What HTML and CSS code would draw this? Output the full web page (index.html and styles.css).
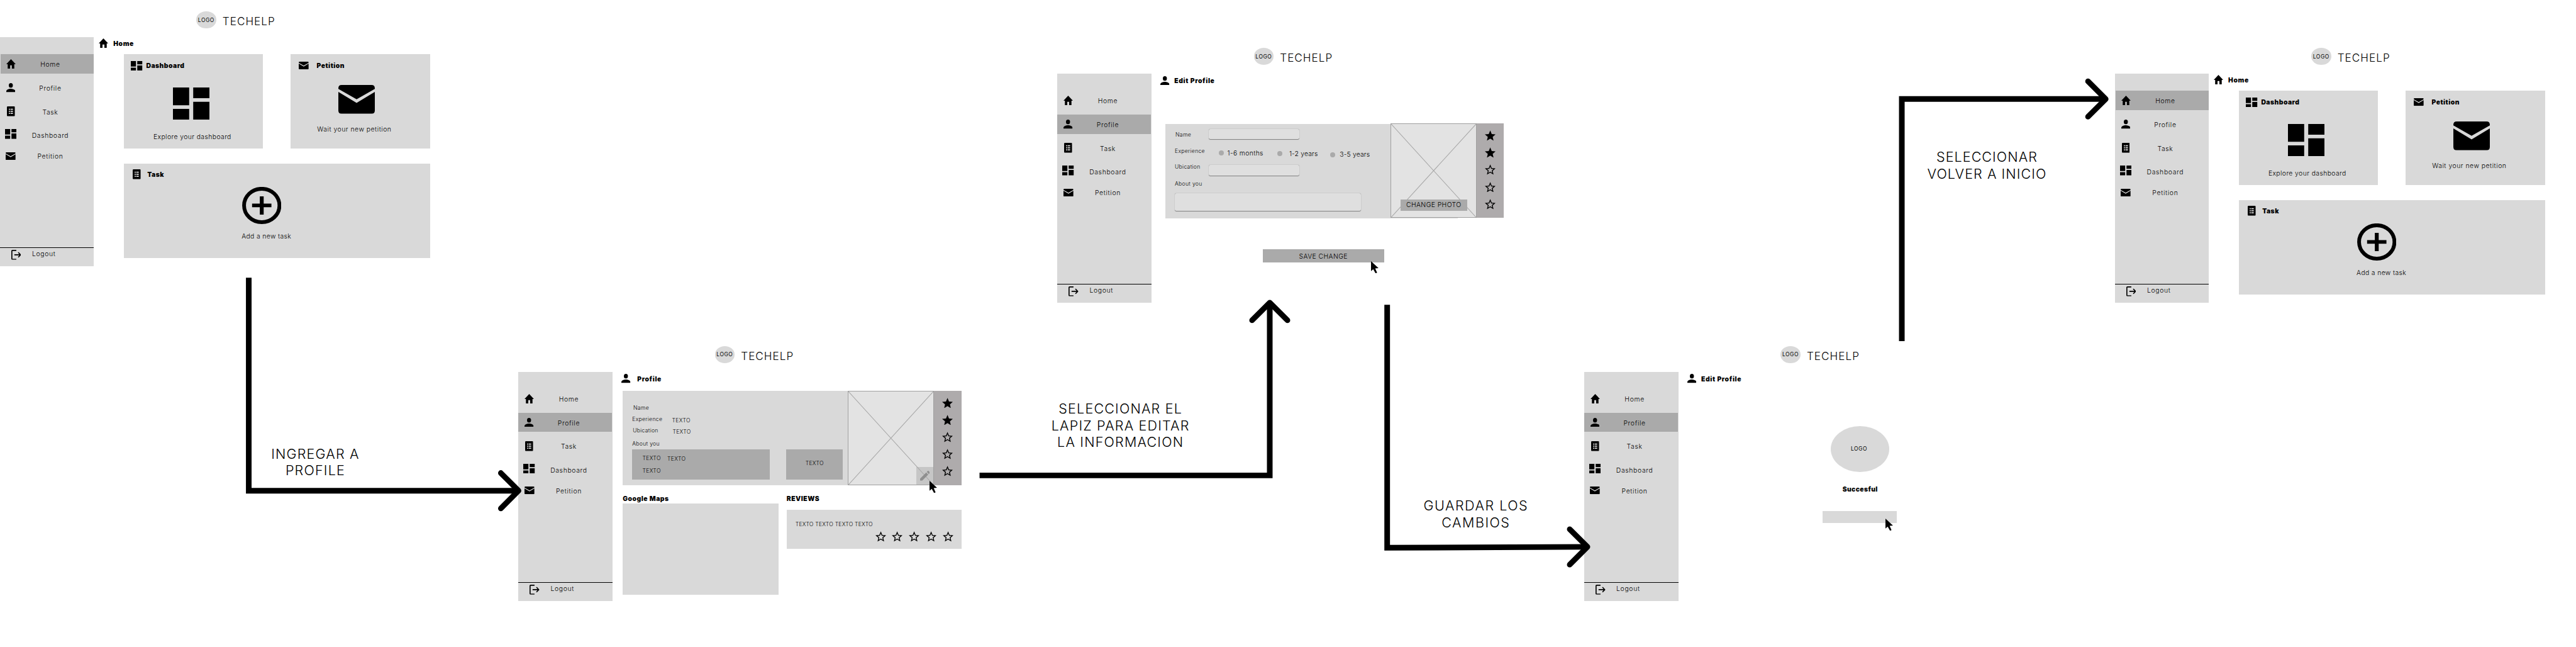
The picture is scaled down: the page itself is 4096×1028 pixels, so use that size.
FILE: index.html
```html
<!DOCTYPE html>
<html lang="es">
<head>
<meta charset="utf-8">
<title>TECHELP – user flow</title>
<link rel="stylesheet" href="styles.css">
</head>
<body>
<svg class="sprite" aria-hidden="true">
  <symbol id="home" viewBox="2 3 20 17" preserveAspectRatio="none"><path d="M10 20v-6h4v6h5v-8h3L12 3 2 12h3v8z"/></symbol>
  <symbol id="person" viewBox="4 4 16 16" preserveAspectRatio="none"><ellipse cx="12" cy="8" rx="3.6" ry="4"/><path d="M12 13.8c-3 0-8 1.4-8 4.2v2h16v-2c0-2.800-5-4.200-8-4.200z"/></symbol>
  <symbol id="task" viewBox="0 0 14.500 18" preserveAspectRatio="none"><path fill-rule="evenodd" d="M1.500 0h11.500a1.500 1.500 0 0 1 1.500 1.500v15a1.500 1.500 0 0 1-1.500 1.500h-11.500a1.500 1.500 0 0 1-1.500-1.500v-15a1.500 1.500 0 0 1 1.500-1.500zM3.500 4.200v2h2v-2zM6.500 4.200v2h4.500v-2zM3.500 8v2h2v-2zM6.500 8v2h4.500v-2zM3.500 11.800v2h2v-2zM6.500 11.800v2h4.500v-2z"/></symbol>
  <symbol id="dashboard" viewBox="3 3 18 18" preserveAspectRatio="none"><path d="M3 13h8V3H3v10zm0 8h8v-6H3v6zm10 0h8V11h-8v10zm0-18v6h8V3h-8z"/></symbol>
  <symbol id="mail" viewBox="0 0 66 52" preserveAspectRatio="none"><path d="M0 7V6Q0 0 6 0H60Q66 0 66 6V7L33 26zM0 12.500 33 32.500 66 12.500V46Q66 52 60 52H6Q0 52 0 46z"/></symbol>
  <symbol id="add" viewBox="0 0 71 67" preserveAspectRatio="none"><ellipse cx="35.500" cy="33.500" rx="32" ry="30.200" fill="none" stroke="currentColor" stroke-width="6.800"/><path d="M32 17h7v13.200h14v6.600H39V50h-7V36.800H18v-6.600h14z"/></symbol>
  <symbol id="logout" viewBox="0 0 18 18" preserveAspectRatio="none"><path fill="none" stroke="currentColor" stroke-width="1.900" d="M9 .95H2.200Q.95.95.95 2.200V15.800Q.95 17.050 2.200 17.050H9M5.500 9H16.500M12.600 4.600 16.700 9 12.600 13.400"/></symbol>
  <symbol id="star" viewBox="2 2 20 19"><path d="M12 17.270 18.180 21l-1.640-7.030L22 9.240l-7.190-.61L12 2 9.190 8.630 2 9.240l5.460 4.730L5.820 21z"/></symbol>
  <symbol id="star-o" viewBox="2 2 20 19"><path d="M22 9.240l-7.190-.62L12 2 9.190 8.630 2 9.240l5.460 4.730L5.820 21 12 17.270 18.180 21l-1.630-7.030L22 9.240zM12 15.400l-3.760 2.270 1-4.280-3.320-2.880 4.380-.38L12 6.100l1.710 4.040 4.380.38-3.320 2.880 1 4.280L12 15.400z"/></symbol>
  <symbol id="edit" viewBox="3 3 18 18" preserveAspectRatio="none"><path d="M3 17.250V21h3.750L17.810 9.940l-3.750-3.750L3 17.250zM20.710 7.040a1 1 0 0 0 0-1.410l-2.340-2.340a1 1 0 0 0-1.410 0l-1.830 1.830 3.750 3.750 1.830-1.830z"/></symbol>
  <symbol id="cursor" viewBox="0 0 14 22"><path d="M0 0V18L4 14.500 8.300 22 11 20.800 7.600 13.200 13.600 12.600z"/></symbol>
  <symbol id="cross" viewBox="0 0 156 171" preserveAspectRatio="none"><path d="M0 0 156 171M156 0 0 171" fill="none" stroke="#a8a8a8" stroke-width="1.200"/></symbol>
</svg>

<main class="canvas">

  <section class="frame frame-1">
    <header class="brand"><span class="logo">LOGO</span><h1>TECHELP</h1></header>
    <div class="body">
      <nav class="side">
        <a class="item active inset"><svg class="i-home"><use href="#home"/></svg><span>Home</span></a>
        <a class="item"><svg class="i-person"><use href="#person"/></svg><span>Profile</span></a>
        <a class="item"><svg class="i-task"><use href="#task"/></svg><span>Task</span></a>
        <a class="item"><svg class="i-dash raised"><use href="#dashboard"/></svg><span>Dashboard</span></a>
        <a class="item last"><svg class="i-mail"><use href="#mail"/></svg><span>Petition</span></a>
        <a class="logout"><svg class="i-out"><use href="#logout"/></svg><span>Logout</span></a>
      </nav>
      <div class="content">
        <h2 class="title home-title"><svg class="i-home"><use href="#home"/></svg><span>Home</span></h2>
        <div class="cards">
          <article class="card card-dash">
            <h3><i><svg class="i-dash"><use href="#dashboard"/></svg></i><span>Dashboard</span></h3>
            <div class="pic"><svg class="big-dash"><use href="#dashboard"/></svg><p>Explore your dashboard</p></div>
          </article>
          <article class="card card-mail">
            <h3><i><svg class="i-mail"><use href="#mail"/></svg></i><span>Petition</span></h3>
            <div class="pic"><svg class="big-mail"><use href="#mail"/></svg><p>Wait your new petition</p></div>
          </article>
          <article class="card card-task">
            <h3><i><svg class="i-task"><use href="#task"/></svg></i><span>Task</span></h3>
            <div class="pic"><svg class="big-add"><use href="#add"/></svg><p>Add a new task</p></div>
          </article>
        </div>
      </div>
    </div>
  </section>

  <section class="frame frame-2">
    <header class="brand"><span class="logo">LOGO</span><h1>TECHELP</h1></header>
    <div class="body">
      <nav class="side">
        <a class="item"><svg class="i-home"><use href="#home"/></svg><span>Home</span></a>
        <a class="item active"><svg class="i-person"><use href="#person"/></svg><span>Profile</span></a>
        <a class="item"><svg class="i-task"><use href="#task"/></svg><span>Task</span></a>
        <a class="item"><svg class="i-dash raised"><use href="#dashboard"/></svg><span>Dashboard</span></a>
        <a class="item last"><svg class="i-mail"><use href="#mail"/></svg><span>Petition</span></a>
        <a class="logout"><svg class="i-out"><use href="#logout"/></svg><span>Logout</span></a>
      </nav>
      <div class="content">
        <h2 class="title profile-title"><svg class="i-person"><use href="#person"/></svg><span>Profile</span></h2>
        <div class="panel view">
          <div class="details">
            <div class="row r-name"><span>Name</span></div>
            <div class="row r-exp"><span>Experience</span><b>TEXTO</b></div>
            <div class="row r-ubi"><span>Ubication</span><b>TEXTO</b></div>
            <div class="row r-about"><span>About you</span></div>
            <div class="boxes">
              <div class="box about"><div><span>TEXTO</span><span class="second">TEXTO</span></div><div><span>TEXTO</span></div></div>
              <div class="box extra"><span>TEXTO</span></div>
            </div>
          </div>
          <div class="photo"><svg class="cross"><use href="#cross"/></svg><span class="edit"><svg><use href="#edit"/></svg></span></div>
          <div class="rating">
            <svg><use href="#star"/></svg><svg><use href="#star"/></svg><svg><use href="#star-o"/></svg><svg><use href="#star-o"/></svg><svg><use href="#star-o"/></svg>
          </div>
        </div>
        <div class="lower">
          <section class="maps"><h3>Google Maps</h3><div class="map"></div></section>
          <section class="reviews"><h3>REVIEWS</h3>
            <div class="review"><p>TEXTO TEXTO TEXTO TEXTO</p>
              <div class="stars"><svg><use href="#star-o"/></svg><svg><use href="#star-o"/></svg><svg><use href="#star-o"/></svg><svg><use href="#star-o"/></svg><svg><use href="#star-o"/></svg></div>
            </div>
          </section>
        </div>
      </div>
    </div>
    <svg class="cursor"><use href="#cursor"/></svg>
  </section>

  <section class="frame frame-3">
    <header class="brand"><span class="logo">LOGO</span><h1>TECHELP</h1></header>
    <div class="body">
      <nav class="side">
        <a class="item"><svg class="i-home"><use href="#home"/></svg><span>Home</span></a>
        <a class="item active"><svg class="i-person"><use href="#person"/></svg><span>Profile</span></a>
        <a class="item"><svg class="i-task"><use href="#task"/></svg><span>Task</span></a>
        <a class="item"><svg class="i-dash raised"><use href="#dashboard"/></svg><span>Dashboard</span></a>
        <a class="item last"><svg class="i-mail"><use href="#mail"/></svg><span>Petition</span></a>
        <a class="logout"><svg class="i-out"><use href="#logout"/></svg><span>Logout</span></a>
      </nav>
      <div class="content">
        <h2 class="title edit-title"><svg class="i-person"><use href="#person"/></svg><span>Edit Profile</span></h2>
        <div class="panel form">
          <div class="fields">
            <div class="field f-name"><span>Name</span><i class="input"></i></div>
            <div class="field f-exp"><span>Experience</span>
              <label class="o1"><i></i>1-6 months</label><label class="o2"><i></i><em>1-2 years</em></label><label class="o3"><i></i>3-5 years</label>
            </div>
            <div class="field f-ubi"><span>Ubication</span><i class="input"></i></div>
            <div class="field f-about"><span>About you</span></div>
            <i class="input area"></i>
          </div>
          <div class="photo"><svg class="cross"><use href="#cross"/></svg><span class="change">CHANGE PHOTO</span></div>
          <div class="rating">
            <svg><use href="#star"/></svg><svg><use href="#star"/></svg><svg><use href="#star-o"/></svg><svg><use href="#star-o"/></svg><svg><use href="#star-o"/></svg>
          </div>
        </div>
        <div class="save">SAVE CHANGE</div>
      </div>
    </div>
    <svg class="cursor"><use href="#cursor"/></svg>
  </section>

  <section class="frame frame-4">
    <header class="brand"><span class="logo">LOGO</span><h1>TECHELP</h1></header>
    <div class="body">
      <nav class="side">
        <a class="item"><svg class="i-home"><use href="#home"/></svg><span>Home</span></a>
        <a class="item active"><svg class="i-person"><use href="#person"/></svg><span>Profile</span></a>
        <a class="item"><svg class="i-task"><use href="#task"/></svg><span>Task</span></a>
        <a class="item"><svg class="i-dash raised"><use href="#dashboard"/></svg><span>Dashboard</span></a>
        <a class="item last"><svg class="i-mail"><use href="#mail"/></svg><span>Petition</span></a>
        <a class="logout"><svg class="i-out"><use href="#logout"/></svg><span>Logout</span></a>
      </nav>
      <div class="content">
        <h2 class="title edit-title"><svg class="i-person"><use href="#person"/></svg><span>Edit Profile</span></h2>
        <div class="success">
          <span class="disc">LOGO</span>
          <strong>Succesful</strong>
          <span class="done"></span>
        </div>
      </div>
    </div>
    <svg class="cursor"><use href="#cursor"/></svg>
  </section>

  <section class="frame frame-5">
    <header class="brand"><span class="logo">LOGO</span><h1>TECHELP</h1></header>
    <div class="body">
      <nav class="side">
        <a class="item active inset"><svg class="i-home"><use href="#home"/></svg><span>Home</span></a>
        <a class="item"><svg class="i-person"><use href="#person"/></svg><span>Profile</span></a>
        <a class="item"><svg class="i-task"><use href="#task"/></svg><span>Task</span></a>
        <a class="item"><svg class="i-dash raised"><use href="#dashboard"/></svg><span>Dashboard</span></a>
        <a class="item last"><svg class="i-mail"><use href="#mail"/></svg><span>Petition</span></a>
        <a class="logout"><svg class="i-out"><use href="#logout"/></svg><span>Logout</span></a>
      </nav>
      <div class="content">
        <h2 class="title home-title"><svg class="i-home"><use href="#home"/></svg><span>Home</span></h2>
        <div class="cards">
          <article class="card card-dash">
            <h3><i><svg class="i-dash"><use href="#dashboard"/></svg></i><span>Dashboard</span></h3>
            <div class="pic"><svg class="big-dash"><use href="#dashboard"/></svg><p>Explore your dashboard</p></div>
          </article>
          <article class="card card-mail">
            <h3><i><svg class="i-mail"><use href="#mail"/></svg></i><span>Petition</span></h3>
            <div class="pic"><svg class="big-mail"><use href="#mail"/></svg><p>Wait your new petition</p></div>
          </article>
          <article class="card card-task">
            <h3><i><svg class="i-task"><use href="#task"/></svg></i><span>Task</span></h3>
            <div class="pic"><svg class="big-add"><use href="#add"/></svg><p>Add a new task</p></div>
          </article>
        </div>
      </div>
    </div>
  </section>

  <svg class="arrows" viewBox="0 0 4660 1169" preserveAspectRatio="none">
    <g fill="none" stroke="#000" stroke-width="10.200" stroke-linejoin="miter">
      <path d="M450 502V887H938"/>
      <path d="M1772 859.400H2297V547"/>
      <path d="M2509.400 551V990.200L2872 988.500"/>
      <path d="M3440.400 616.700V179H3809"/>
    </g>
    <g fill="none" stroke="#000" stroke-width="10" stroke-linejoin="round" stroke-linecap="round">
      <path d="M906 855 938 887 906 919"/>
      <path d="M2265 579 2297 547 2329 579"/>
      <path d="M2839.600 956.700 2871.700 988.500 2839.600 1020.700"/>
      <path d="M3777.200 147 3809.300 179 3777.200 211"/>
    </g>
  </svg>
  <p class="step step-1">INGREGAR A<br>PROFILE</p>
  <p class="step step-2">SELECCIONAR EL<br>LAPIZ PARA EDITAR<br>LA INFORMACION</p>
  <p class="step step-3">GUARDAR LOS<br>CAMBIOS</p>
  <p class="step step-4">SELECCIONAR<br>VOLVER A INICIO</p>
</main>
</body>
</html>
```

FILE: styles.css
```css
/* 1rem is ten units of the 4660-unit wide board */
html { font-size: calc(100vw / 466); }
* { box-sizing: border-box; margin: 0; padding: 0; }
body {
  background: #fff;
  color: #000;
  font-family: Inter, "Open Sans", sans-serif;
  overflow: hidden;
}
h1, h2, h3, b, i, em { font: inherit; }
svg { display: block; fill: currentColor; color: #000; flex: none; }
.sprite { position: absolute; width: 0; height: 0; }
.canvas { position: relative; width: 466rem; height: 116.9rem; overflow: hidden; }

/* frames placed on the board */
.frame { position: absolute; width: 81rem; height: 48.1rem; }
.frame-1 { left: 0; top: 0; }
.frame-2 { left: 93.8rem; top: 60.5rem; }
.frame-3 { left: 191.3rem; top: 6.6rem; }
.frame-4 { left: 286.6rem; top: 60.5rem; }
.frame-5 { left: 382.6rem; top: 6.6rem; }

.brand { height: 6.7rem; padding: 2.1rem 0 0 35.5rem; display: flex; align-items: flex-start; gap: 1.15rem; }
.logo {
  width: 3.6rem; height: 3rem; border-radius: 50%; background: #d9d9d9;
  display: flex; align-items: center; justify-content: center;
  font-size: .97rem; letter-spacing: .06em; white-space: nowrap;
}
.brand h1 { font-size: 1.95rem; line-height: 2.4rem; padding-top: .5rem; letter-spacing: .06em; font-weight: 300; }
.body { display: flex; height: 41.4rem; }

/* sidebar */
.side { width: 17rem; flex: none; background: #d9d9d9; padding-top: 3.1rem; display: flex; flex-direction: column; gap: .8rem; }
.item { height: 3.5rem; flex: none; display: grid; grid-template-columns: 3.9rem 10.4rem; align-items: center; justify-items: center; }
.item span, .logout span { font-size: 1.18rem; line-height: 1.4rem; letter-spacing: .065em; font-weight: 300; }
.item span { padding-top: .4rem; }
.active { background: #aaa; margin-right: .1rem; }
.active.inset { margin: 0 0 0 .1rem; padding-right: .1rem; grid-template-columns: 3.8rem 10.4rem; }
.last { margin-top: -.55rem; }
.raised { margin-bottom: .5rem; }
.logout { margin-top: auto; height: 3.4rem; border-top: .1rem solid #000; padding: .4rem 0 0 2rem; display: flex; gap: 2rem; }
.logout span { padding-top: .1rem; }

.i-home { width: 1.7rem; height: 1.7rem; }
.i-person { width: 1.64rem; height: 1.65rem; }
.i-task { width: 1.45rem; height: 1.8rem; }
.i-dash { width: 2.1rem; height: 1.8rem; }
.i-mail { width: 1.8rem; height: 1.4rem; }
.i-out { width: 1.8rem; height: 1.8rem; }

.content { width: 63.8rem; flex: none; }
.title { display: flex; align-items: flex-start; font-size: 1.18rem; font-weight: 900; line-height: 1.4rem; letter-spacing: .06em; }
.home-title { height: 3.1rem; padding: .2rem 0 0 .9rem; gap: .9rem; }
.home-title span { padding-top: .4rem; }
.profile-title { height: 3.4rem; padding: .43rem 0 0 1.64rem; gap: 1.2rem; }
.profile-title span { padding-top: .35rem; }
.edit-title { height: 3.4rem; padding: .43rem 0 0 1.64rem; gap: .87rem; }
.edit-title span { padding-top: .25rem; }

/* home cards */
.cards { margin-left: 5.4rem; display: grid; grid-template-columns: 25.2rem 25.2rem; grid-template-rows: 17.1rem 17.1rem; gap: 2.7rem 5rem; }
.card { background: #d9d9d9; }
.card-task { grid-column: span 2; }
.card h3 { height: 4.2rem; padding-left: 1.3rem; display: flex; align-items: center; font-size: 1.18rem; font-weight: 900; line-height: 1.4rem; letter-spacing: .045em; }
.card h3 i { width: 2.1rem; display: flex; justify-content: center; }
.card h3 span { padding: .16rem 0 0 .65rem; }
.card-mail h3 span { padding-left: 1.3rem; }
.card-task h3 { height: 3.8rem; }
.card-task h3 span { padding: .36rem 0 0 .85rem; }
.pic { display: flex; flex-direction: column; align-items: center; }
.pic p { font-size: 1.18rem; line-height: 1.4rem; font-weight: 300; letter-spacing: .05em; white-space: nowrap; }
.card-dash .pic { width: 24.4rem; padding-top: 1.8rem; gap: 2.48rem; }
.card-dash p { padding-left: .4rem; letter-spacing: .04em; }
.card-mail .pic { width: 23.8rem; padding-top: 1.4rem; gap: 2.18rem; }
.card-mail p { padding-right: .8rem; }
.card-task .pic { width: 49.9rem; padding-top: .45rem; gap: 1.53rem; }
.card-task p { padding-left: 1.7rem; letter-spacing: .035em; }
.big-dash { width: 6.6rem; height: 5.8rem; }
.big-mail { width: 6.6rem; height: 5.2rem; }
.big-add { width: 7.1rem; height: 6.7rem; }

/* profile panels */
.panel { height: 17.1rem; display: flex; background: #d9d9d9; font-size: .98rem; line-height: 1.2rem; font-weight: 300; letter-spacing: .035em; }
.panel > * { flex: none; }
.view { margin-left: 1.86rem; width: 61.24rem; }
.details { width: 40.71rem; padding: 2.15rem 0 0 1.71rem; }
.row { display: grid; grid-template-columns: 7.2rem auto; align-items: center; justify-content: start; height: 2rem; }
.r-name span { padding-left: .2rem; }
.r-exp b { padding-top: .6rem; }
.r-ubi { height: 2.2rem; }
.r-ubi span { padding-left: .1rem; }
.r-ubi b { padding: .4rem 0 0 .1rem; }
.r-about { height: 2.25rem; padding-top: .35rem; }
.boxes { display: flex; gap: 3rem; }
.box { height: 5.5rem; background: #aaa; }
.about { width: 24.9rem; padding: 1.05rem 0 0 1.85rem; display: grid; grid-template-rows: 1.2rem 1.2rem; row-gap: 1.1rem; }
.about div { display: flex; }
.about div span { width: 4.5rem; }
.second { padding-top: .1rem; }
.extra { width: 10.2rem; display: flex; align-items: center; justify-content: center; padding-bottom: .4rem; }
.photo { position: relative; width: 15.6rem; height: 17.1rem; background: #e3e3e3; border: .1rem solid #a0a0a0; }
.cross { width: 100%; height: 100%; }
.edit { position: absolute; right: 0; bottom: 0; width: 3.1rem; height: 3.2rem; background: rgba(170,170,170,.5); display: flex; align-items: center; justify-content: center; }
.edit svg { width: 1.8rem; height: 1.8rem; color: #8f8f8f; }
.rating { width: 4.93rem; height: 17.1rem; background: #aeabac; display: flex; flex-direction: column; align-items: center; gap: 1.2rem; padding-top: 1.25rem; }
.rating svg, .stars svg { width: 1.95rem; height: 1.9rem; }

.lower { display: flex; margin-left: 1.86rem; gap: 1.4rem; padding-top: 2.1rem; }
.lower h3 { font-size: 1.18rem; font-weight: 900; line-height: 1.2rem; height: 1.2rem; margin-top: -.15rem; letter-spacing: .05em; }
.maps { width: 28.24rem; }
.map { height: 16.5rem; background: #d9d9d9; margin-top: .15rem; }
.reviews { width: 31.6rem; }
.review { height: 7.1rem; margin-top: 1.25rem; background: #d9d9d9; padding: 2.05rem 1.45rem 0 1.6rem; font-size: .98rem; line-height: 1.2rem; font-weight: 300; letter-spacing: .025em; }
.stars { display: flex; justify-content: flex-end; gap: 1.1rem; padding-top: .7rem; }

/* edit form */
.form { margin: 5.7rem 0 0 2.52rem; width: 52.9rem; }
.form .photo, .form .rating { margin-top: -.1rem; }
.fields { width: 40.7rem; padding: .9rem 0 0 1.7rem; line-height: 1.5rem; }
.field { display: grid; grid-template-columns: 6.1rem auto; justify-content: start; align-items: start; }
.input { display: block; width: 16.4rem; height: 1.9rem; border-radius: .3rem; background: #dfdfdf; box-shadow: 0 .1rem .1rem rgba(0,0,0,.4), 0 0 .15rem rgba(0,0,0,.12); }
.f-name span { padding: .35rem 0 0 .12rem; }
.f-exp { display: flex; height: 2.2rem; margin-top: 1.4rem; }
.f-exp > span { width: 8rem; }
.f-exp label { display: flex; align-items: center; font-size: 1.18rem; letter-spacing: .035em; height: 1.5rem; white-space: nowrap; }
.f-exp label i { width: .9rem; height: .9rem; border-radius: 50%; background: #aaa; margin-right: .6rem; }
.f-exp .o1 { margin-top: .33rem; width: 10.6rem; }
.f-exp .o2 { margin-top: .4rem; width: 9.55rem; letter-spacing: .015em; }
.f-exp .o2 i { margin-right: 1.2rem; }
.o2 em { padding-top: .25rem; }
.f-exp .o3 { margin-top: .65rem; letter-spacing: .015em; }
.f-exp .o3 i { margin-right: .8rem; }
.f-ubi { margin-top: 1rem; }
.f-ubi span { margin-top: -.3rem; }
.f-about { margin-top: .9rem; }
.area { width: 33.7rem; height: 3.2rem; margin-top: .8rem; }
.change { position: absolute; left: 1.75rem; top: 13.6rem; width: 12rem; height: 2.1rem; background: #aaa; font-size: 1.18rem; line-height: 2.15rem; padding-left: 1rem; letter-spacing: .04em; white-space: nowrap; }
.save { margin: 5.6rem 0 0 20.1rem; width: 22rem; height: 2.4rem; background: #aaa; font-size: 1.18rem; font-weight: 300; line-height: 2.8rem; text-align: center; letter-spacing: .04em; }

/* success message */
.success { width: 65.8rem; padding-top: 6.4rem; display: flex; flex-direction: column; align-items: center; }
.disc { width: 10.6rem; height: 8.3rem; border-radius: 50%; background: #d9d9d9; display: flex; align-items: center; justify-content: center; font-size: .97rem; padding-right: .4rem; letter-spacing: .06em; }
.success strong { font-size: 1.18rem; font-weight: 900; line-height: 1.4rem; margin-top: 2.48rem; letter-spacing: .035em; }
.done { width: 13.4rem; height: 2.2rem; background: #d9d9d9; margin: 3.22rem .2rem 0 0; }

.cursor { position: absolute; width: 1.4rem; height: 2.2rem; }
.frame-2 .cursor { left: 74.4rem; top: 26.4rem; }
.frame-3 .cursor { left: 56.7rem; top: 40.6rem; }
.frame-4 .cursor { left: 54.5rem; top: 33.3rem; }

/* flow arrows and their captions */
.arrows { position: absolute; left: 0; top: 0; width: 466rem; height: 116.9rem; }
.step { position: absolute; width: 30rem; text-align: center; font-size: 2.45rem; line-height: 3rem; font-weight: 300; white-space: nowrap; }
.step-1 { left: 42.05rem; top: 80.55rem; letter-spacing: .055em; }
.step-2 { left: 187.7rem; top: 72.4rem; letter-spacing: .055em; }
.step-3 { left: 252rem; top: 89.9rem; letter-spacing: .07em; }
.step-4 { left: 344.45rem; top: 26.9rem; letter-spacing: .05em; }
```
